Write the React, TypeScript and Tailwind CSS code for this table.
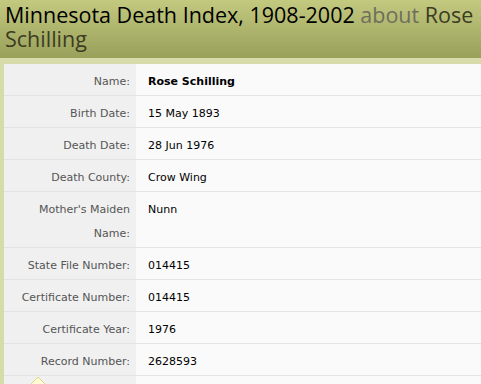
const rows: { label: string; value: string; bold?: boolean }[] = [
  { label: "Name:", value: "Rose Schilling", bold: true },
  { label: "Birth Date:", value: "15 May 1893" },
  { label: "Death Date:", value: "28 Jun 1976" },
  { label: "Death County:", value: "Crow Wing" },
  { label: "Mother's Maiden Name:", value: "Nunn" },
  { label: "State File Number:", value: "014415" },
  { label: "Certificate Number:", value: "014415" },
  { label: "Certificate Year:", value: "1976" },
  { label: "Record Number:", value: "2628593" },
  { label: "", value: "" },
];

export default function App() {
  return (
    <div className="relative h-[384px] w-[481px] overflow-hidden bg-[#d6dca9] font-['DejaVu_Sans',sans-serif]">
      <div className="h-[58px] bg-gradient-to-b from-[#c3c97f] to-[#99a05a] px-[5px] pt-[3px]">
        <h1 className="font-['Open_Sans',sans-serif] text-[21.5px] leading-[24px] text-black">
          Minnesota Death Index, 1908-2002{" "}
          <span className="text-[#6e6e5c]">about</span>{" "}
          <span className="text-[#3c3c24]">Rose Schilling</span>
        </h1>
      </div>
      <div className="ml-[4px] mt-[6px] bg-[#fafafa]">
        {rows.map((row, i) => (
          <div key={i} className="flex border-b border-[#e3e3e3] text-[11px]">
            <div className="w-[132px] shrink-0 bg-[#f0f0f0] pb-[1px] pr-[6px] pl-2 pt-[6px] text-right leading-6 text-[#555]">
              {row.label || "\u00a0"}
            </div>
            <div
              className={`pl-3 pt-[6px] pb-[1px] leading-6 text-black ${row.bold ? "font-bold" : ""}`}
            >
              {row.value}
            </div>
          </div>
        ))}
      </div>
      <svg className="absolute left-[28px] top-[376px]" width="20" height="10" viewBox="0 0 20 10">
        <path d="M1 10 L10 1 L19 10" fill="#fffbd6" stroke="#e2d48a" strokeWidth="1" />
      </svg>
    </div>
  );
}
